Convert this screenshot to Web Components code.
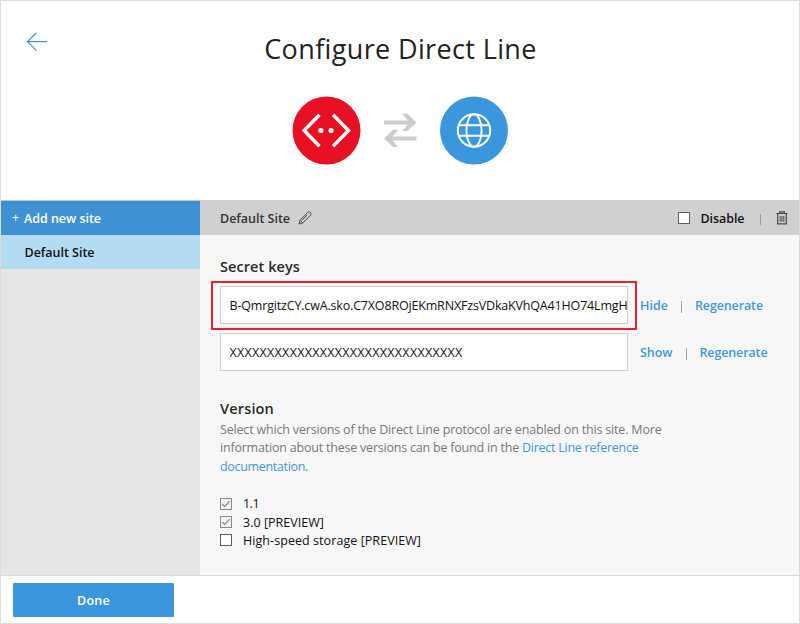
<!DOCTYPE html>
<html lang="en">
<head>
<meta charset="utf-8">
<title>Configure Direct Line</title>
<style>
html,body{margin:0;padding:0}
body{width:800px;height:624px;overflow:hidden;background:#fff;font-family:"Open Sans","Noto Sans",sans-serif;color:#222}
</style>
</head>
<body>
<channel-page></channel-page>
<script>
// A single text run whose tracking is tuned to occupy the width "w".
class FitText extends HTMLElement {
  connectedCallback() {
    const root = this.attachShadow({mode: 'open'});
    root.innerHTML = '<style>:host{display:inline-block;white-space:pre;flex:none}span{display:inline-block}</style><span><slot></slot></span>';
    const w = parseFloat(this.getAttribute('w'));
    const span = root.querySelector('span');
    const n = this.textContent.length;
    if (w && n) {
      span.style.letterSpacing = ((w - span.getBoundingClientRect().width) / n) + 'px';
    }
  }
}
class CheckBox extends HTMLElement {
  connectedCallback() {
    const on = this.hasAttribute('checked');
    this.attachShadow({mode: 'open'}).innerHTML = `
<style>:host{display:block;flex:none;width:10px;height:10px;border:1px solid ${on ? '#8a8a8a' : '#5c5c5c'};background:${on ? '#f3f3f3' : '#fff'}}
svg{display:block}</style>${on ? '<svg width="10" height="10" viewBox="0 0 10 10"><path d="M1.2 5 3.7 7.5 8.8 2.2" fill="none" stroke="#858585" stroke-width="1.1"/></svg>' : ''}`;
  }
}
class VersionOption extends HTMLElement {
  connectedCallback() {
    this.attachShadow({mode: 'open'}).innerHTML = `
<style>:host{display:flex;align-items:center;gap:11px;height:18.2px;font-size:12.5px;line-height:18px;color:#111}
check-box{margin-bottom:1px}</style>
<check-box ${this.hasAttribute('checked') ? 'checked' : ''}></check-box><slot></slot>`;
  }
}
class SecretKey extends HTMLElement {
  connectedCallback() {
    const hot = this.hasAttribute('highlight');
    this.attachShadow({mode: 'open'}).innerHTML = `
<style>
:host{display:flex;align-items:center;height:38px;font-size:12.5px;position:relative}
.field{box-sizing:border-box;width:408px;height:38px;border:1px solid #cfcfcf;background:#fff;line-height:37px;color:#111;overflow:hidden;padding-left:8.5px;white-space:nowrap}
.clip{overflow:hidden;width:397.5px;height:36px}
.links{display:flex;align-items:center;margin-left:12px;padding-top:2px;font-size:12.5px;font-weight:600;color:#3f97df;line-height:20px}
i{width:1px;height:12px;background:#aaa59f;margin:1px 13px 0 13px}
.mark{position:absolute;left:-9px;top:-5px;width:422px;height:45px;border:2px solid #e8222d}
</style>
<div class="field"><div class="clip"><slot></slot></div></div>
<div class="links"><slot name="toggle"></slot><i></i><fit-text w="68">Regenerate</fit-text></div>
${hot ? '<div class="mark"></div>' : ''}`;
  }
}
class PageHeader extends HTMLElement {
  connectedCallback() {
    this.attachShadow({mode: 'open'}).innerHTML = `
<style>
:host{display:grid;grid-template-columns:60px 1fr 60px;height:199px;background:#fff}
.back{margin:31px 0 0 25px;width:22px;height:20px}
.mid{display:flex;flex-direction:column;align-items:center}
h1{margin:28px 0 0 1px;font-size:27px;font-weight:400;line-height:40px;height:40px;color:#222}
.icons{display:flex;align-items:center;margin-top:27px}
svg{display:block;overflow:visible}
.swap{margin:0 22px 0 22px}
</style>
<svg class="back" viewBox="0 0 22 20"><path d="M21 9.6H1.5M10.2 1 1.5 9.6l8.7 8.7" fill="none" stroke="#3c92df" stroke-width="1.2"/></svg>
<div class="mid">
<h1><fit-text w="272.5">Configure Direct Line</fit-text></h1>
<div class="icons">
<svg width="68" height="68" viewBox="-0.5 -0.5 68 68"><circle cx="34" cy="34" r="34" fill="#e81123"/><path d="M27 18.2 11.6 34 27 49.8M40.6 18.2 56 34 40.6 49.8" fill="none" stroke="#fff" stroke-width="3.4"/><circle cx="28.4" cy="34" r="2.6" fill="#fff"/><circle cx="38.6" cy="34" r="2.6" fill="#fff"/></svg>
<svg class="swap" width="36" height="36" viewBox="0 -0.5 36 36"><g fill="#ccc"><path d="M2 8.1H26L20.2 1.3h5.3L34.5 9.9 25.5 18.4h-5.3L26 12H2z"/><path d="M34.5 24H10.5L16.3 17.3H11L2 25.9 11 34.5h5.3L10.5 27.9H34.5z"/></g></svg>
<svg width="68" height="68" viewBox="0 -0.5 68 68"><circle cx="34" cy="34" r="34" fill="#3a96dd"/><g fill="none" stroke="#fff" stroke-width="1.9"><circle cx="34" cy="34" r="16.2"/><ellipse cx="34" cy="34" rx="7.6" ry="16.2"/><path d="M18.8 28.7H49.2M18.8 39.3H49.2"/></g></svg>
</div></div>`;
  }
}
class SiteList extends HTMLElement {
  connectedCallback() {
    this.attachShadow({mode: 'open'}).innerHTML = `
<style>
:host{display:block;background:#e6e6e6;font-size:12.5px;font-weight:600}
.add{display:flex;align-items:center;height:35px;background:#3f92d2;color:#fff;box-sizing:border-box;border-top:1px solid #b5c9d8;padding-left:11px}
.plus{width:12px;line-height:20px;font-weight:400}
.site{display:flex;align-items:center;height:34px;background:#b3dcf2;color:#111;padding-left:23.5px}
</style>
<div class="add"><fit-text class="plus">+</fit-text><fit-text w="77">Add new site</fit-text></div>
<div class="site"><fit-text w="70">Default Site</fit-text></div>`;
  }
}
class SiteToolbar extends HTMLElement {
  connectedCallback() {
    this.attachShadow({mode: 'open'}).innerHTML = `
<style>
:host{display:flex;align-items:center;box-sizing:border-box;height:35px;background:#d0d0d0;padding:1px 0 0 20px;font-size:12.5px;font-weight:600;color:#333}
svg{display:block;flex:none}
.right{display:flex;align-items:center;margin-left:auto;padding-right:11.5px;color:#111}
check-box{margin:0 11px 1px 0}
i{width:1px;height:11px;background:#9b9b9b;margin:2px 15px 0 15px}
</style>
<fit-text w="70">Default Site</fit-text>
<svg width="14" height="14" viewBox="0 0 14 14" style="margin-left:8px"><path d="M1 13 2 9.3 9.7 1.4Q11.2.2 12.5 1.5 13.7 2.8 12.6 4.2L4.8 12zM2 9.3 4.8 12M9.2 3.8 4.3 9" fill="none" stroke="#4c4c4c" stroke-width="1"/></svg>
<div class="right"><check-box></check-box><fit-text w="44">Disable</fit-text><i></i>
<svg width="12" height="14" viewBox="0 0 12 14"><path d="M.5 2.5h11M3.7 2.2V.8h4.6v1.4M1.7 2.7V12.8h8.6V2.7" fill="none" stroke="#484848" stroke-width="1.2"/><path d="M4.2 5v5.7M6 5v5.7M7.8 5v5.7" stroke="#66605a" stroke-width="1.2"/></svg></div>`;
  }
}
class SiteDetails extends HTMLElement {
  connectedCallback() {
    this.attachShadow({mode: 'open'}).innerHTML = `
<style>
:host{display:block;background:#f7f7f7;padding-left:20px}
h2{margin:0;font-size:14.5px;font-weight:600;line-height:20px;height:20px;color:#2a2a2a}
.first{padding-top:22px}
.k1{margin-top:9px}.k2{margin-top:9px}
.second{margin-top:28px}
.copy{margin-top:2px;font-size:12.5px;color:#777}
.copy div{height:18.3px;line-height:18px}
a{color:#4298e0}
.opts{margin-top:19.4px}
</style>
<h2 class="first"><fit-text w="80">Secret keys</fit-text></h2>
<secret-key class="k1" highlight><fit-text w="398">B-QmrgitzCY.cwA.sko.C7XO8ROjEKmRNXFzsVDkaKVhQA41HO74LmgH</fit-text><fit-text slot="toggle" w="28">Hide</fit-text></secret-key>
<secret-key class="k2"><fit-text w="233">XXXXXXXXXXXXXXXXXXXXXXXXXXXXXXX</fit-text><fit-text slot="toggle" w="32.5">Show</fit-text></secret-key>
<h2 class="second"><fit-text w="54">Version</fit-text></h2>
<div class="copy">
<div><fit-text w="441.5">Select which versions of the Direct Line protocol are enabled on this site. More</fit-text></div>
<div><fit-text w="302">information about these versions can be found in the </fit-text><a><fit-text w="116.5">Direct Line reference</fit-text></a></div>
<div><a><fit-text w="85">documentation</fit-text></a>.</div>
</div>
<div class="opts">
<version-option checked><fit-text w="16">1.1</fit-text></version-option>
<version-option checked><fit-text w="81">3.0 [PREVIEW]</fit-text></version-option>
<version-option><fit-text w="178">High-speed storage [PREVIEW]</fit-text></version-option>
</div>`;
  }
}
class ActionBar extends HTMLElement {
  connectedCallback() {
    this.attachShadow({mode: 'open'}).innerHTML = `
<style>:host{display:block;box-sizing:border-box;height:48px;background:#fff;border-top:1px solid #d9d9d9;padding:7px 0 0 12px}
button{display:flex;align-items:center;justify-content:center;width:161px;height:34px;border:0;padding:0;margin:0;background:#3a96dd;color:#fff;font:600 12.5px "Open Sans",sans-serif;border-radius:1px}</style>
<button><fit-text w="33">Done</fit-text></button>`;
  }
}
class ChannelPage extends HTMLElement {
  connectedCallback() {
    this.attachShadow({mode: 'open'}).innerHTML = `
<style>
:host{display:flex;flex-direction:column;box-sizing:border-box;width:800px;height:624px;border:1px solid #dcdcdc;background:#fff}
main{display:grid;grid-template-columns:199px 1fr;flex:1}
.pane{display:grid;grid-template-rows:35px 1fr}
</style>
<page-header></page-header>
<main><site-list></site-list><div class="pane"><site-toolbar></site-toolbar><site-details></site-details></div></main>
<action-bar></action-bar>`;
  }
}
customElements.define('fit-text', FitText);
customElements.define('check-box', CheckBox);
customElements.define('version-option', VersionOption);
customElements.define('secret-key', SecretKey);
customElements.define('page-header', PageHeader);
customElements.define('site-list', SiteList);
customElements.define('site-toolbar', SiteToolbar);
customElements.define('site-details', SiteDetails);
customElements.define('action-bar', ActionBar);
customElements.define('channel-page', ChannelPage);
</script>
</body>
</html>
